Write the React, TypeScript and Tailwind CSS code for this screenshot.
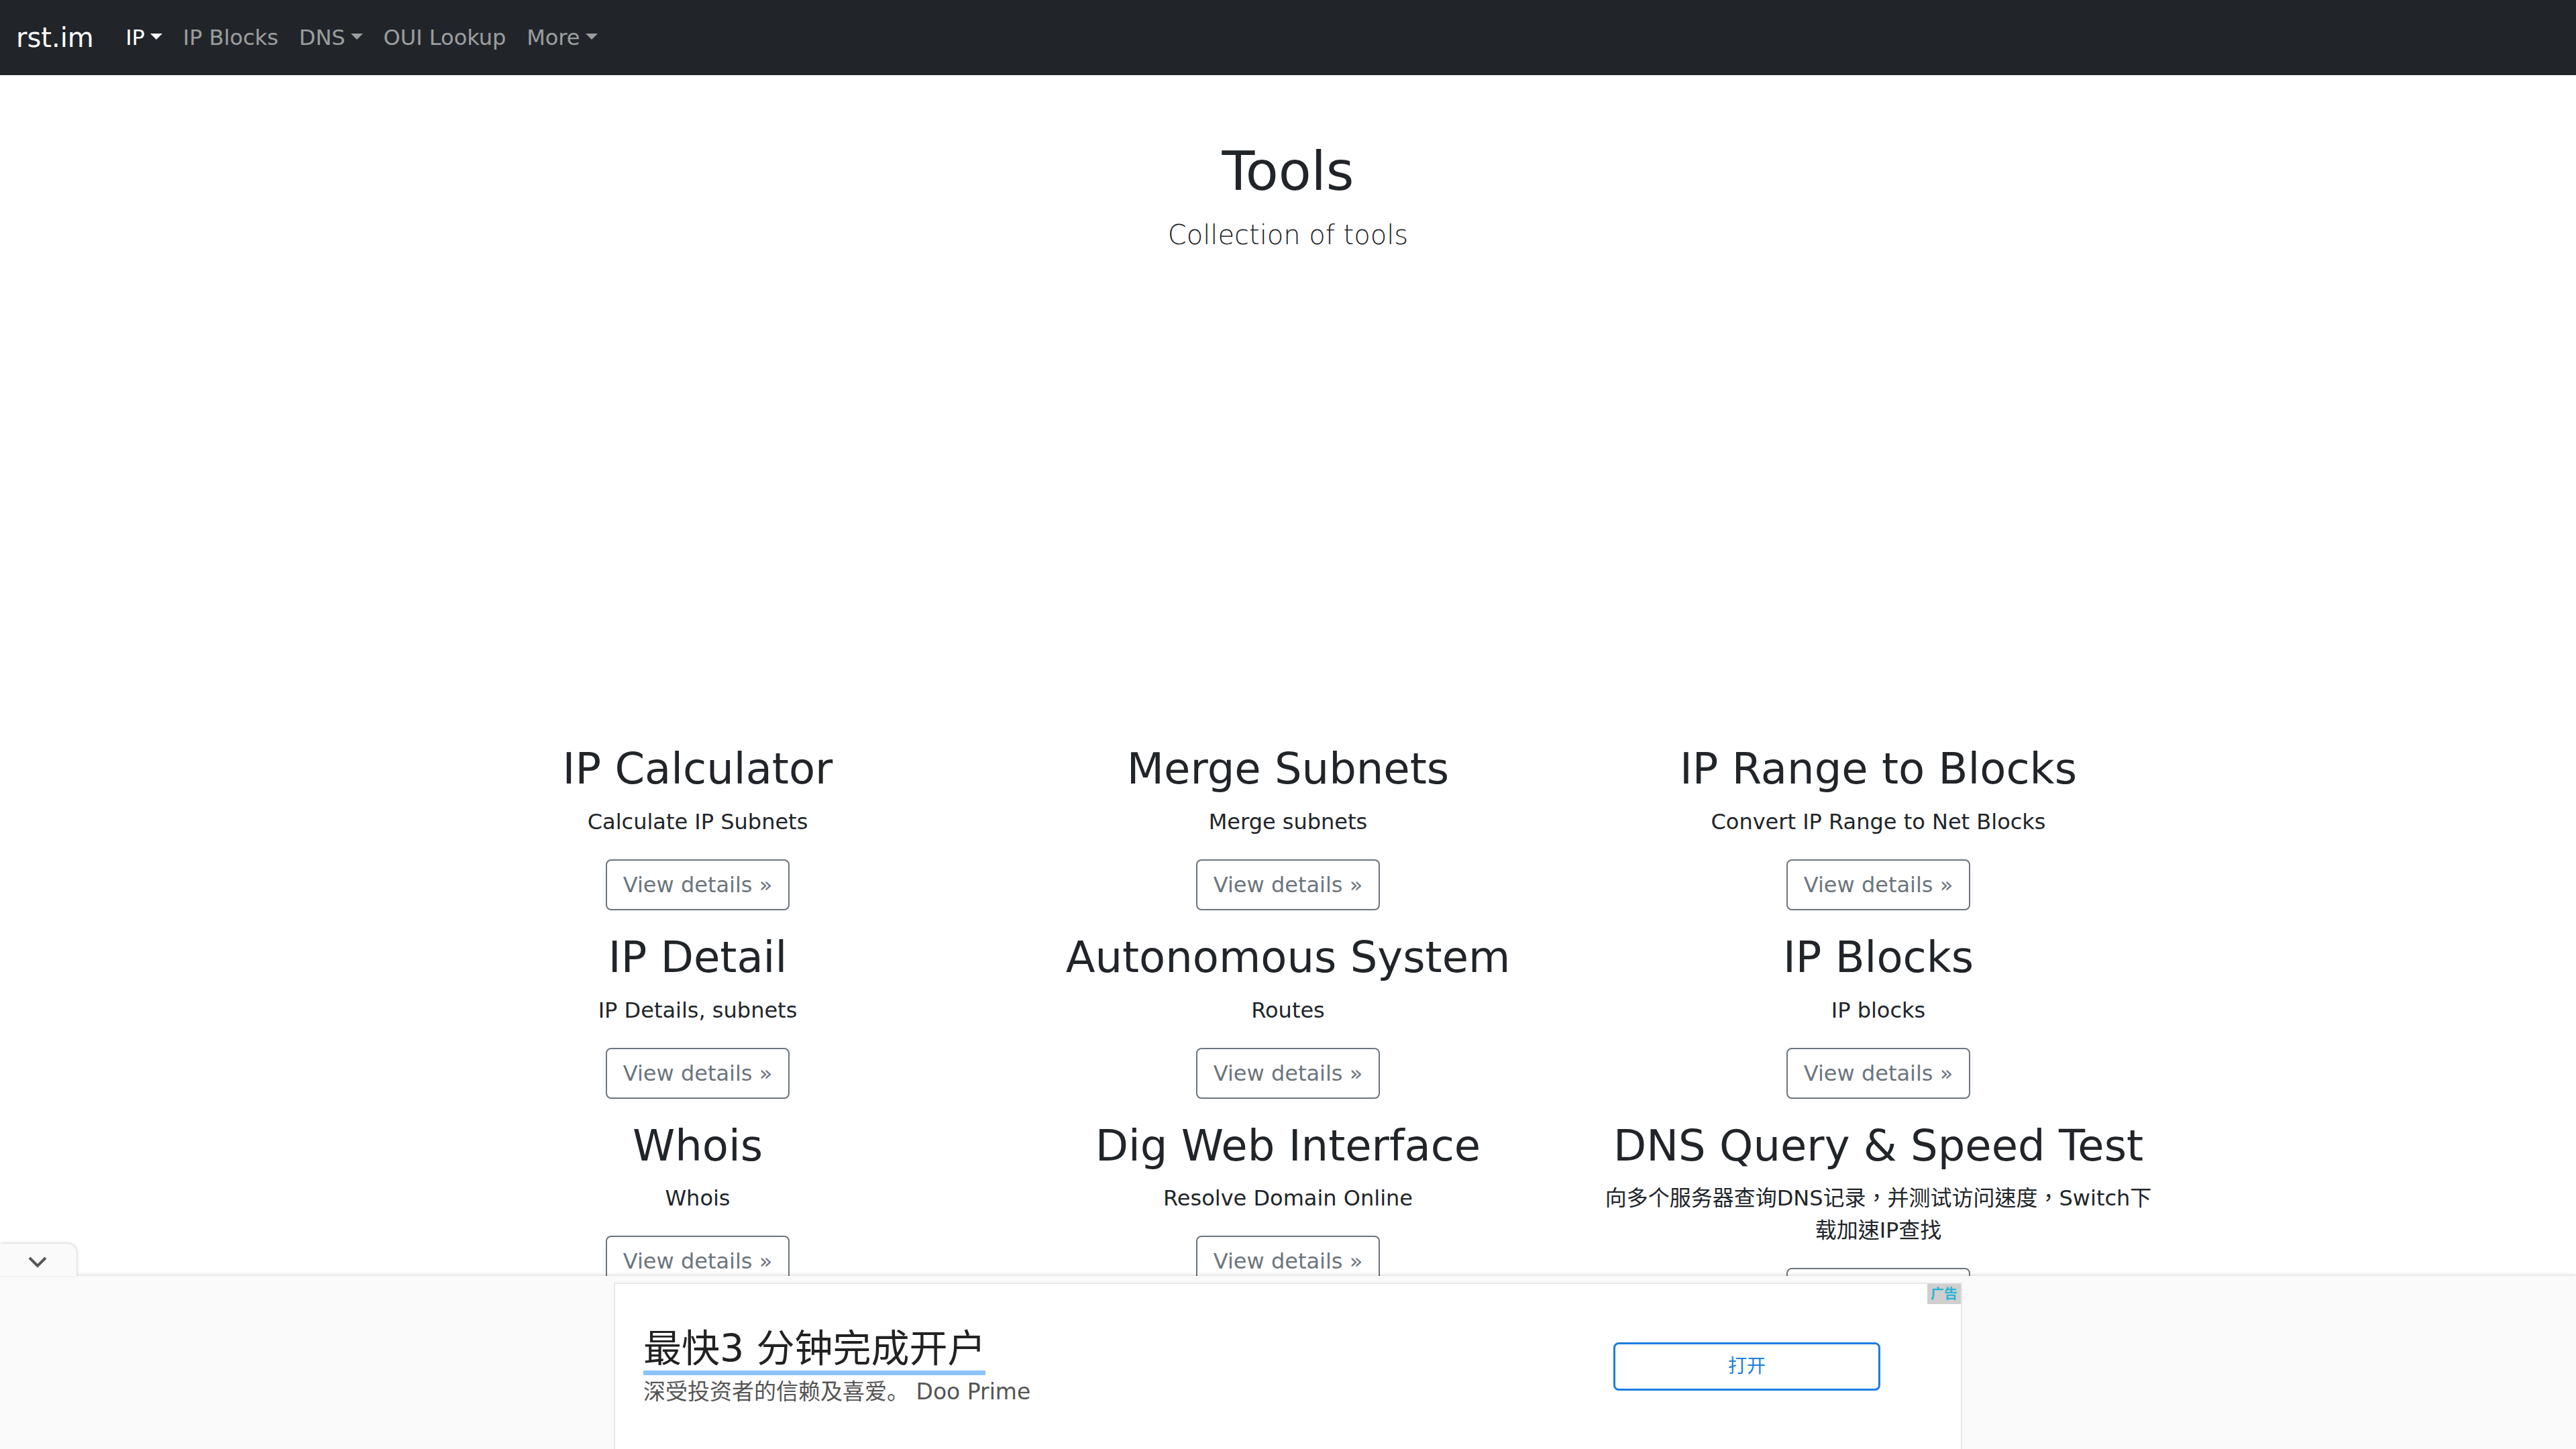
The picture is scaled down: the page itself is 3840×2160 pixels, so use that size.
import React from "react"

const tools = [
  { title: "IP Calculator", desc: "Calculate IP Subnets" },
  { title: "Merge Subnets", desc: "Merge subnets" },
  { title: "IP Range to Blocks", desc: "Convert IP Range to Net Blocks" },
  { title: "IP Detail", desc: "IP Details, subnets" },
  { title: "Autonomous System", desc: "Routes" },
  { title: "IP Blocks", desc: "IP blocks" },
  { title: "Whois", desc: "Whois" },
  { title: "Dig Web Interface", desc: "Resolve Domain Online" },
  { title: "DNS Query & Speed Test", desc: "向多个服务器查询DNS记录，并测试访问速度，Switch下载加速IP查找" },
]

function Caret() {
  return (
    <span className="ml-[0.255em] inline-block h-0 w-0 border-x-[0.3em] border-t-[0.3em] border-x-transparent border-t-current align-[0.255em]" />
  )
}

function Navbar() {
  const links = [
    { label: "IP", caret: true, active: true },
    { label: "IP Blocks" },
    { label: "DNS", caret: true },
    { label: "OUI Lookup" },
    { label: "More", caret: true },
  ]
  return (
    <nav className="flex h-[112px] items-center bg-[#212529] px-[24px]">
      <a className="mr-[32px] py-[10px] text-[40px] leading-[1.5] text-white">rst.im</a>
      <ul className="flex">
        {links.map((l) => (
          <li key={l.label}>
            <a className={`block px-[15.4px] py-[16px] text-[32px] leading-[1.5] ${l.active ? "text-white" : "text-white/55"}`}>
              {l.label}
              {l.caret && <Caret />}
            </a>
          </li>
        ))}
      </ul>
    </nav>
  )
}

function ToolCard({ title, desc }: { title: string; desc: string }) {
  return (
    <div className="px-[24px] text-center">
      <h2 className="mb-[16px] text-[64px] font-normal leading-[1.2]">{title}</h2>
      <p className="mb-[32px] text-[32px] leading-[1.5]">{desc}</p>
      <p className="mb-[32px] text-[32px] leading-[1.5]">
        <a className="inline-block rounded-[8px] border-2 border-[#6c757d] px-[24px] py-[12px] text-[32px] leading-[1.5] text-[#6c757d]">
          View details »
        </a>
      </p>
    </div>
  )
}

function AnchorAd() {
  return (
    <div className="fixed inset-x-0 bottom-0 font-['DejaVu_Sans','Noto_Sans_CJK_SC',sans-serif]">
      <div className="relative h-[48px] w-[114px] rounded-tr-[14px] bg-[#fafafa] shadow-[1px_-1px_4px_rgba(0,0,0,0.18)]">
        <svg className="absolute left-[42px] top-[19px]" width="28" height="17" viewBox="0 0 28 17">
          <path d="M2 2 L14 14 L26 2" fill="none" stroke="#555" strokeWidth="4" />
        </svg>
      </div>
      <div className="flex h-[258px] justify-center bg-[#fafafa] pt-[10px] shadow-[0_-2px_4px_rgba(0,0,0,0.12)]">
        <div className="relative flex w-[2010px] items-center border-2 border-b-0 border-[#e6e6e6] bg-white pl-[42px] pr-[120px]">
          <span className="absolute right-0 top-0 flex h-[30px] w-[50px] items-center justify-center bg-[#cfcfcf] text-[20px] font-bold text-[#28b4d2]">
            广告
          </span>
          <div className="flex-1">
            <div className="text-[57px] leading-[1.2] text-[#222]">
              <span className="border-b-[7px] border-[#8dc4f7]">最快3 分钟完成开户</span>
            </div>
            <div className="mt-[8px] text-[33px] leading-[1.4] text-[#555]">深受投资者的信赖及喜爱。 Doo Prime</div>
          </div>
          <div className="flex h-[72px] w-[398px] items-center justify-center rounded-[8px] border-[3px] border-[#1a7ee0] text-[28px] text-[#1a7ee0]">
            打开
          </div>
        </div>
      </div>
    </div>
  )
}

export default function App() {
  return (
    <div className="h-[2160px] overflow-hidden bg-white font-['DejaVu_Sans','Noto_Sans_CJK_TC',sans-serif] text-[#212529]">
      <Navbar />
      <header className="pt-[96px] text-center">
        <h1 className="mb-[16px] text-[80px] font-normal leading-[1.2]">Tools</h1>
        <p className="text-[40px] font-light leading-[1.5]">Collection of tools</p>
      </header>
      <div className="h-[728px]" />
      <main className="mx-auto grid w-[2640px] grid-cols-3 items-start">
        {tools.map((t) => (
          <ToolCard key={t.title} title={t.title} desc={t.desc} />
        ))}
      </main>
      <AnchorAd />
    </div>
  )
}
